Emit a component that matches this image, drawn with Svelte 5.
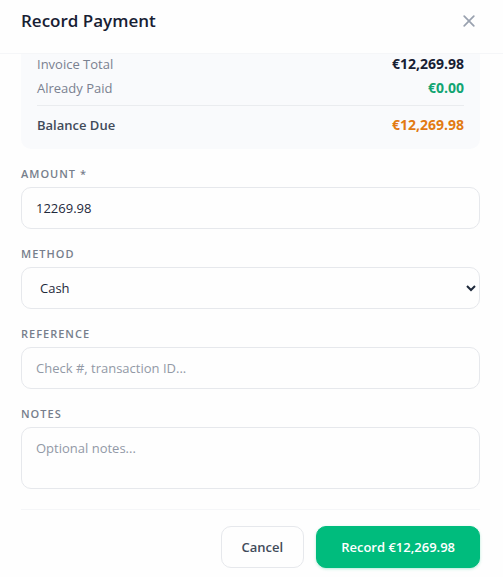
<script>
	const invoiceTotal = 12269.98;
	const alreadyPaid = 0;
	const methods = ['Cash', 'Bank Transfer', 'Card', 'Check'];

	let amount = $state('12269.98');
	let method = $state('Cash');
	let reference = $state('');
	let notes = $state('');

	function money(value) {
		return '€' + Number(value || 0).toLocaleString('en-US', {
			minimumFractionDigits: 2,
			maximumFractionDigits: 2
		});
	}
</script>

<div class="modal">
	<header>
		<h2>Record Payment</h2>
		<button class="close" type="button" aria-label="Close">
			<svg width="12" height="12" viewBox="0 0 12 12" fill="none" stroke="currentColor">
				<path d="M1.2 1.2l9.6 9.6M10.8 1.2L1.2 10.8" stroke-width="1.7" stroke-linecap="round" />
			</svg>
		</button>
	</header>

	<form onsubmit={(e) => e.preventDefault()}>
		<div class="summary">
			<div class="row">
				<span>Invoice Total</span>
				<strong>{money(invoiceTotal)}</strong>
			</div>
			<div class="row">
				<span>Already Paid</span>
				<strong class="paid">{money(alreadyPaid)}</strong>
			</div>
			<div class="row balance">
				<span>Balance Due</span>
				<strong class="due">{money(invoiceTotal - alreadyPaid)}</strong>
			</div>
		</div>

		<div class="field">
			<label for="amount">Amount *</label>
			<input id="amount" type="text" inputmode="decimal" bind:value={amount} />
		</div>
		<div class="field">
			<label for="method">Method</label>
			<select id="method" bind:value={method}>
				{#each methods as m}
					<option value={m}>{m}</option>
				{/each}
			</select>
		</div>
		<div class="field">
			<label for="reference">Reference</label>
			<input id="reference" type="text" placeholder="Check #, transaction ID..." bind:value={reference} />
		</div>
		<div class="field">
			<label for="notes">Notes</label>
			<textarea id="notes" placeholder="Optional notes..." bind:value={notes}></textarea>
		</div>

		<footer>
			<button class="btn cancel" type="button">Cancel</button>
			<button class="btn submit" type="submit">Record {money(amount)}</button>
		</footer>
	</form>
</div>

<style>
	:global(body) {
		background: #fefefe;
	}

	.modal {
		font-family: 'Segoe UI', 'Open Sans', sans-serif;
		font-size: 13px;
		line-height: 20px;
		color: #1e293b;
	}

	.modal * {
		box-sizing: border-box;
	}

	header {
		display: flex;
		align-items: center;
		justify-content: space-between;
		height: 54px;
		padding: 0 23px 12px 21px;
		border-bottom: 1px solid #f5f6f8;
	}

	h2 {
		margin: 0;
		font-size: 17px;
		line-height: 24px;
		font-weight: 600;
		color: #172033;
	}

	.close {
		display: flex;
		padding: 5px;
		border: 0;
		background: none;
		color: #99a1af;
	}

	form {
		display: flex;
		flex-direction: column;
		gap: 16px;
		padding: 0 23px 9px 21px;
	}

	.summary {
		display: flex;
		flex-direction: column;
		gap: 4px;
		padding: 0 16px 14px;
		border-radius: 0 0 10px 10px;
		background: #f9fafc;
	}

	.row {
		display: flex;
		justify-content: space-between;
		color: #7a8190;
	}

	.row strong {
		font-size: 14px;
		font-weight: 700;
		color: #172033;
	}

	.row .paid {
		color: #12a572;
	}

	.balance {
		margin-top: 3px;
		padding-top: 9px;
		border-top: 1px solid #eaecef;
		font-weight: 600;
		color: #414b5a;
	}

	.row .due {
		color: #e27a12;
	}

	.field {
		display: flex;
		flex-direction: column;
		gap: 4px;
	}

	label {
		font-size: 11px;
		line-height: 18px;
		font-weight: 600;
		letter-spacing: 1px;
		text-transform: uppercase;
		color: #777e8c;
	}

	input,
	select,
	textarea {
		width: 100%;
		height: 42px;
		margin: 0;
		padding: 0 14px;
		border: 1px solid #e6e8ec;
		border-radius: 10px;
		background: #fefefe;
		font: inherit;
		color: #1e293b;
	}

	textarea {
		height: 62px;
		padding: 10px 14px;
		resize: none;
	}

	input::placeholder,
	textarea::placeholder {
		color: #9299a6;
	}

	footer {
		display: flex;
		justify-content: flex-end;
		gap: 12px;
		margin-top: 4px;
		padding-top: 16px;
		border-top: 1px solid #f5f6f8;
	}

	.btn {
		height: 42px;
		border: 1px solid #e6e8ec;
		border-radius: 10px;
		background: #fefefe;
		font: inherit;
		font-weight: 600;
		color: #414b5a;
	}

	.cancel {
		padding: 0 20px;
	}

	.submit {
		padding: 0 24px;
		border-color: #00bc7d;
		background: #00bc7d;
		color: #fff;
		box-shadow: 0 1px 3px rgba(0, 188, 125, 0.3);
	}
</style>
